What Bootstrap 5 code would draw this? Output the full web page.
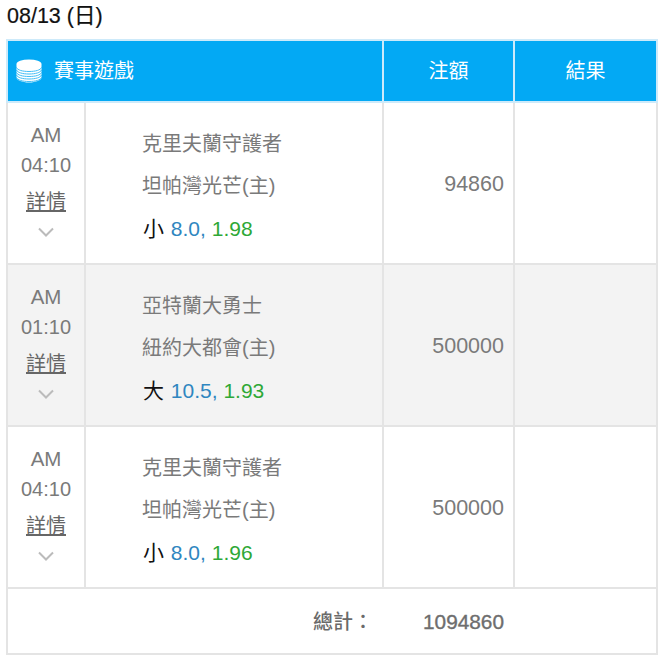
<!DOCTYPE html>
<html lang="zh-Hant"><head><meta charset="utf-8">
<link href="https://cdn.jsdelivr.net/npm/bootstrap@5.3.0/dist/css/bootstrap.min.css" rel="stylesheet">
<style>
body{font-family:"Liberation Sans","Noto Sans CJK TC",sans-serif;background:#fff;padding:0 6px;font-size:20px}
.day-title{font-size:21.500px;line-height:24px;color:#111;margin:0;padding-top:4px;height:39px;padding-left:1px;-webkit-text-stroke:.2px #111}
.bet-table{table-layout:fixed;width:650px;border-collapse:collapse;margin:0;color:#7a7a7a}
.bet-table td,.bet-table th{border:2px solid #e4e4e4;padding:0}
.bet-table thead th{background:#03a9f4;color:#fff;height:62px;font-weight:400;font-size:20px;border-color:#cdeafa;text-align:center;vertical-align:middle}
.head-game{padding-left:8px!important;text-align:left!important}
.game-icon{margin-right:12px;vertical-align:-5px}
.bet-row td{height:162px;vertical-align:middle}
.bet-row.alt td{background:#f3f3f3}
.time-cell{text-align:center;font-size:20.500px;line-height:30px;padding-bottom:10px!important}
.time-val{font-size:20px}
.time-cell a{color:#666;display:block;line-height:33px;margin-top:6px;font-size:20px}
.time-cell svg{display:block;margin:8px auto 0}
.match-cell{padding-left:56px!important;line-height:42px;padding-top:6px!important}
.pick-line{color:#111;font-size:21px;margin-top:1px;padding-left:1px}
.odd-a{color:#2f86c0;margin-left:1px}.odd-b{color:#2ea836}
.amount{text-align:right;padding-right:9px!important;padding-top:2px!important;font-size:21.500px}
.total-row td{height:66px;vertical-align:middle;border-bottom:2px solid #e4e4e4;padding-top:2px}
.total-label{text-align:right;padding-right:10px!important;font-weight:500;color:#6a6a6a;border-right:0!important}
.total-amount{font-size:20.800px;color:#6e6e6e;text-align:right;padding-right:10px!important;-webkit-text-stroke:.35px #6e6e6e}
.no-side{border-left:0!important;border-right:0!important}
.end-side{border-left:0!important}
</style></head><body>
<h1 class="day-title fw-normal">08/13 (日)</h1>
<table class="table bet-table">
<colgroup><col style="width:78px"><col style="width:298px"><col style="width:131px"><col style="width:143px"></colgroup>
<thead><tr>
<th colspan="2" class="head-game"><svg class="game-icon" width="26" height="24" viewBox="0 0 26 24"><ellipse cx="13" cy="5" rx="12.500" ry="4.500" fill="#fff"/><path d="M.5 5.500v13c0 2.600 5.600 5 12.500 5s12.500-2.400 12.500-5v-13z" fill="#fff"/><g fill="none" stroke="#03a9f4" stroke-width="1" opacity=".75"><path d="M.5 8.500c1 2.600 6 4 12.500 4s11.500-1.400 12.500-4"/><path d="M.5 11c1 2.600 6 4 12.500 4s11.500-1.400 12.500-4"/><path d="M.5 13.500c1 2.600 6 4 12.500 4s11.500-1.400 12.500-4"/><path d="M.5 16c1 2.600 6 4 12.500 4s11.500-1.400 12.500-4"/><path d="M.5 18.500c1 2.600 6 4 12.500 4s11.500-1.400 12.500-4"/></g></svg>賽事遊戲</th>
<th>注額</th><th>結果</th></tr></thead>
<tbody>
<tr class="bet-row"><td class="time-cell">AM<br><span class="time-val">04:10</span><a href="#">詳情</a><svg width="18" height="10" viewBox="0 0 18 10"><path d="M2 1.500 9 8.500l7-7" fill="none" stroke="#bbb" stroke-width="2"/></svg></td>
<td class="match-cell">克里夫蘭守護者<br>坦帕灣光芒(主)<div class="pick-line">小 <span class="odd-a">8.0,</span> <span class="odd-b">1.98</span></div></td><td class="amount">94860</td><td></td></tr>
<tr class="bet-row alt"><td class="time-cell">AM<br><span class="time-val">01:10</span><a href="#">詳情</a><svg width="18" height="10" viewBox="0 0 18 10"><path d="M2 1.500 9 8.500l7-7" fill="none" stroke="#bbb" stroke-width="2"/></svg></td>
<td class="match-cell">亞特蘭大勇士<br>紐約大都會(主)<div class="pick-line">大 <span class="odd-a">10.5,</span> <span class="odd-b">1.93</span></div></td><td class="amount">500000</td><td></td></tr>
<tr class="bet-row"><td class="time-cell">AM<br><span class="time-val">04:10</span><a href="#">詳情</a><svg width="18" height="10" viewBox="0 0 18 10"><path d="M2 1.500 9 8.500l7-7" fill="none" stroke="#bbb" stroke-width="2"/></svg></td>
<td class="match-cell">克里夫蘭守護者<br>坦帕灣光芒(主)<div class="pick-line">小 <span class="odd-a">8.0,</span> <span class="odd-b">1.96</span></div></td><td class="amount">500000</td><td></td></tr>
<tr class="total-row"><td colspan="2" class="total-label">總計：</td><td class="total-amount no-side">1094860</td><td class="end-side"></td></tr>
</tbody></table>
</body></html>
